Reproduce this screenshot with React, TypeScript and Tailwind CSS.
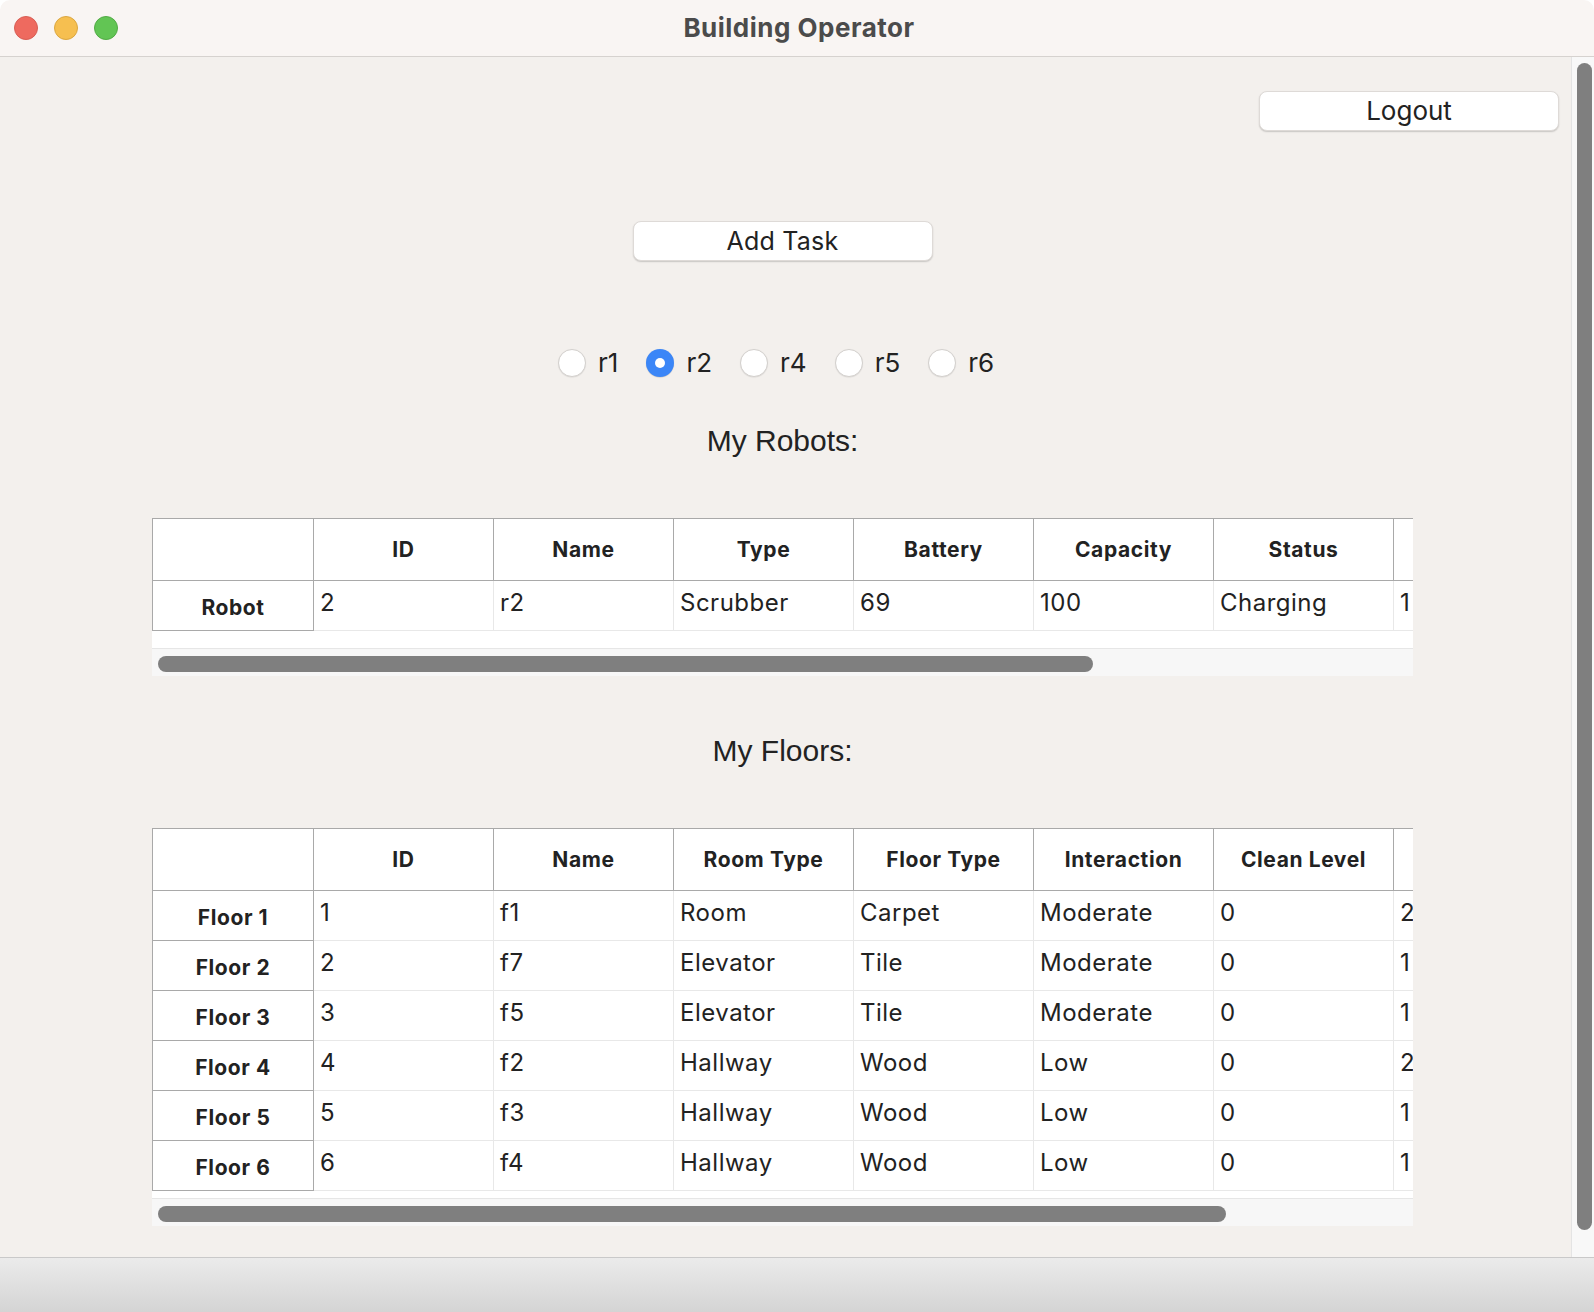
import React from 'react';

const robotHeaders = ['ID', 'Name', 'Type', 'Battery', 'Capacity', 'Status', ''];
const robotRows = [['2', 'r2', 'Scrubber', '69', '100', 'Charging', '1']];

const floorHeaders = ['ID', 'Name', 'Room Type', 'Floor Type', 'Interaction', 'Clean Level', ''];
const floorRows = [
  ['1', 'f1', 'Room', 'Carpet', 'Moderate', '0', '2'],
  ['2', 'f7', 'Elevator', 'Tile', 'Moderate', '0', '1'],
  ['3', 'f5', 'Elevator', 'Tile', 'Moderate', '0', '1'],
  ['4', 'f2', 'Hallway', 'Wood', 'Low', '0', '2'],
  ['5', 'f3', 'Hallway', 'Wood', 'Low', '0', '1'],
  ['6', 'f4', 'Hallway', 'Wood', 'Low', '0', '1'],
];

const radios = ['r1', 'r2', 'r4', 'r5', 'r6'];

type TableProps = {
  headers: string[];
  rows: string[][];
  labels: string[];
  viewportClass: string;
  thumbClass: string;
};

const DataTable: React.FC<TableProps> = ({ headers, rows, labels, viewportClass, thumbClass }) => (
  <div className="w-[1261px] flex flex-col font-['Inter',sans-serif] text-[#222]">
    <div className={`flex overflow-hidden bg-white ${viewportClass}`}>
      {/* vertical header */}
      <div className="flex flex-col shrink-0 w-[162px]">
        <div className="h-[63px] border-t border-l border-r border-b border-[#a9a9a9]" />
        {labels.map((label) => (
          <div
            key={label}
            className="h-[50px] border-l border-r border-b border-[#a9a9a9] flex items-center justify-center pt-[5px] text-[21px] tracking-[0.6px] font-bold"
          >
            {label}
          </div>
        ))}
      </div>
      {headers.map((h, ci) => (
        <div key={ci} className="flex flex-col shrink-0 w-[180px]">
          <div className="h-[63px] border-t border-r border-b border-[#a9a9a9] flex items-center justify-center pt-[1px] text-[21px] tracking-[0.6px] font-bold">
            {h}
          </div>
          {rows.map((row, ri) => (
            <div
              key={ri}
              className="h-[50px] border-r border-b border-[#e8e8e8] pl-[6px] pt-[8px] text-[24px] tracking-[0.5px] leading-[28px] whitespace-nowrap"
            >
              {row[ci]}
            </div>
          ))}
        </div>
      ))}
    </div>
    <div className="h-[28px] bg-[#f7f7f7] border-t border-[#e6e6e6]">
      <div className={`mt-[7px] ml-[6px] h-[16px] rounded-full bg-[#7f7f7f] ${thumbClass}`} />
    </div>
  </div>
);

const App: React.FC = () => {
  return (
    <div className="w-[1594px] h-[1312px] bg-white">
      <div className="w-full h-full flex flex-col rounded-t-[10px] overflow-hidden">
        {/* Title bar */}
        <div className="h-[57px] shrink-0 bg-[#f9f5f3] border-b border-[#d6d2cf] flex items-center relative">
          <div className="flex items-center gap-[16px] pl-[14px]">
            <div className="w-[24px] h-[24px] rounded-full bg-[#ee6a5f] border border-[#d85e54]" />
            <div className="w-[24px] h-[24px] rounded-full bg-[#f6bf50] border border-[#dba741]" />
            <div className="w-[24px] h-[24px] rounded-full bg-[#62c554] border border-[#52ab45]" />
          </div>
          <div className="absolute left-0 right-0 top-0 h-[55px] flex items-center justify-center pl-[4px] font-['Inter',sans-serif] font-bold text-[26px] tracking-[0.5px] text-[#4b4b4b]">
            Building Operator
          </div>
        </div>

        {/* Body */}
        <div className="flex-1 flex bg-[#f3f0ed]">
          <div className="flex-1 flex flex-col items-center pr-[6px]">
            <button className="self-end mr-[6px] mt-[34px] w-[300px] h-[40px] rounded-[8px] bg-white border border-[#dedad7] shadow-[0_1px_1.5px_rgba(0,0,0,0.18)] font-['Inter',sans-serif] text-[26px] text-[#222] leading-none">
              Logout
            </button>

            <button className="mt-[90px] w-[300px] h-[40px] rounded-[8px] bg-white border border-[#dedad7] shadow-[0_1px_1.5px_rgba(0,0,0,0.18)] font-['Inter',sans-serif] text-[25px] tracking-[0.2px] text-[#222] leading-none">
              Add Task
            </button>

            <div className="mt-[88px] self-start ml-[558px] flex items-center gap-[28px] font-['Inter',sans-serif] text-[26px] text-[#222]">
              {radios.map((r) => (
                <div key={r} className="flex items-center gap-[12px] h-[28px]">
                  {r === 'r2' ? (
                    <div className="w-[28px] h-[28px] rounded-full bg-[#3b86f7] flex items-center justify-center shadow-[0_0.5px_1px_rgba(0,0,0,0.2)]">
                      <div className="w-[10px] h-[10px] rounded-full bg-white" />
                    </div>
                  ) : (
                    <div className="w-[28px] h-[28px] rounded-full bg-white border border-[#d3d0cd] shadow-[0_0.5px_1px_rgba(0,0,0,0.1)]" />
                  )}
                  <span className="leading-none">{r}</span>
                </div>
              ))}
            </div>

            <div className="mt-[46px] font-['Liberation_Sans',Arial,sans-serif] text-[30px] leading-[36px] text-[#222]">
              My Robots:
            </div>

            <div className="mt-[59px]">
              <DataTable
                headers={robotHeaders}
                rows={robotRows}
                labels={['Robot']}
                viewportClass="h-[130px]"
                thumbClass="w-[935px]"
              />
            </div>

            <div className="mt-[57px] font-['Liberation_Sans',Arial,sans-serif] text-[30px] leading-[36px] text-[#222]">
              My Floors:
            </div>

            <div className="mt-[59px]">
              <DataTable
                headers={floorHeaders}
                rows={floorRows}
                labels={['Floor 1', 'Floor 2', 'Floor 3', 'Floor 4', 'Floor 5', 'Floor 6']}
                viewportClass="h-[370px]"
                thumbClass="w-[1068px]"
              />
            </div>
          </div>

          {/* Vertical scrollbar */}
          <div className="w-[23px] shrink-0 bg-[#f8f8f8] border-l border-[#e4e4e4] pl-[5px] pt-[6px]">
            <div className="w-[15px] h-[1167px] rounded-full bg-[#7f7f7f]" />
          </div>
        </div>

        {/* Bottom bar */}
        <div className="h-[55px] shrink-0 border-t border-[#c9c9c9] bg-gradient-to-b from-[#ebebeb] to-[#d4d4d4]" />
      </div>
    </div>
  );
};

export default App;
